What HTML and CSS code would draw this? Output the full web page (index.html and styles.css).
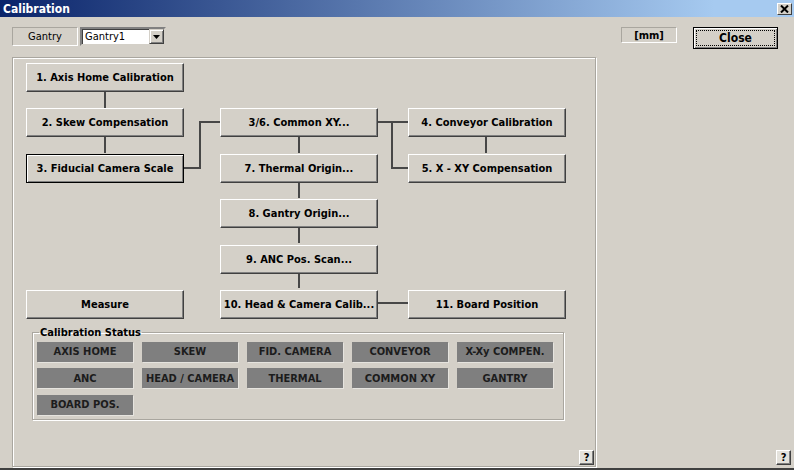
FILE: index.html
```html
<!DOCTYPE html>
<html lang="en">
<head>
  <meta charset="UTF-8" />
  <title>Calibration</title>
  <link rel="stylesheet" href="styles.css">
</head>
<body>
  <div class="window">
    <div class="titlebar">
      <span class="title">Calibration</span>
      <span class="caption-btn">
        <svg width="9" height="8" viewBox="0 0 9 8"><path d="M1 0.5 L8 7.5 M8 0.5 L1 7.5" stroke="#000" stroke-width="2"/></svg>
      </span>
    </div>

    <div class="client">
      <div class="left-pane">
        <div class="gantry-row">
          <span class="static-box">Gantry</span>
          <div class="combo">
            <span class="combo-text">Gantry1</span>
            <span class="combo-btn">
              <svg width="7" height="4" viewBox="0 0 7 4"><path d="M0 0 H7 L3.5 4 Z" fill="#000"/></svg>
            </span>
          </div>
        </div>

        <div class="frame">
          <div class="flow">
            <!-- connector lines between the steps -->
            <svg class="links" width="540" height="256" viewBox="0 0 540 256">
              <g stroke="#474747" stroke-width="2" fill="none">
                <path d="M79 29 V45" />
                <path d="M79 74 V90" />
                <path d="M158 105 H174 V59 H194" />
                <path d="M352 59 H382" />
                <path d="M366 59 V105 H382" />
                <path d="M460 74 V90" />
                <path d="M273 74 V90" />
                <path d="M273 119 V135" />
                <path d="M273 164 V180" />
                <path d="M273 209 V225" />
                <path d="M352 240 H382" />
              </g>
            </svg>

            <button class="step c1 r1">1. Axis Home Calibration</button>
            <button class="step c1 r2">2. Skew Compensation</button>
            <button class="step c1 r3 focused">3. Fiducial Camera Scale</button>
            <button class="step c2 r2">3/6. Common XY...</button>
            <button class="step c2 r3">7. Thermal Origin...</button>
            <button class="step c2 r4">8. Gantry Origin...</button>
            <button class="step c2 r5">9. ANC Pos. Scan...</button>
            <button class="step c2 r6">10. Head &amp; Camera Calib...</button>
            <button class="step c3 r2">4. Conveyor Calibration</button>
            <button class="step c3 r3">5. X - XY Compensation</button>
            <button class="step c3 r6">11. Board Position</button>
            <button class="step c1 r6">Measure</button>
          </div>

          <fieldset class="status">
            <legend>Calibration Status</legend>
            <div class="status-grid">
              <span class="flag">AXIS HOME</span>
              <span class="flag">SKEW</span>
              <span class="flag">FID. CAMERA</span>
              <span class="flag">CONVEYOR</span>
              <span class="flag">X-Xy COMPEN.</span>
              <span class="flag">ANC</span>
              <span class="flag">HEAD / CAMERA</span>
              <span class="flag">THERMAL</span>
              <span class="flag">COMMON XY</span>
              <span class="flag">GANTRY</span>
              <span class="flag">BOARD POS.</span>
            </div>
          </fieldset>

          <button class="help">?</button>
        </div>
      </div>

      <div class="right-pane">
        <div class="unit-row">
          <span class="unit-box">[mm]</span>
          <button class="close-btn"><span class="focus-rect">Close</span></button>
        </div>
        <button class="help">?</button>
      </div>
    </div>
  </div>
</body>
</html>
```

FILE: styles.css
```css
:root {
  --face: #d4d0c8;
  --shadow: #808080;
  --dark: #404040;
  --light: #ffffff;
  --ui-font: "DejaVu Sans Condensed", "Liberation Sans", sans-serif;
}

body {
  margin: 0;
  background-color: var(--face);
  font-family: var(--ui-font);
  font-size: 11px;
  color: #000;
}

.window {
  width: 794px;
  height: 470px;
  display: flex;
  flex-direction: column;
  overflow: hidden;
  box-sizing: border-box;
  border-bottom: 2px solid var(--dark);
}

.titlebar {
  height: 17px;
  flex: none;
  display: flex;
  align-items: center;
  justify-content: space-between;
  padding: 0 2px 0 3px;
  background: linear-gradient(to right, #0a246a, #a6caf0 90%);
}

.title {
  color: #fff;
  font-weight: bold;
  font-size: 12px;
}

.caption-btn {
  width: 15px;
  height: 12px;
  display: flex;
  align-items: center;
  justify-content: center;
  box-sizing: border-box;
  background-color: var(--face);
  border: 1px solid;
  border-color: var(--light) var(--dark) var(--dark) var(--light);
}

.client {
  flex: 1;
  display: flex;
}

.left-pane {
  width: 596px;
  padding: 10px 0 1px 12px;
  box-sizing: border-box;
  display: flex;
  flex-direction: column;
}

/* Gantry selector */
.gantry-row {
  display: flex;
  gap: 2px;
  height: 19px;
}

.static-box {
  width: 66px;
  box-sizing: border-box;
  display: flex;
  align-items: center;
  justify-content: center;
  border: 1px solid;
  border-color: #a9a69f var(--light) var(--light) #a9a69f;
}

.combo {
  width: 86px;
  box-sizing: border-box;
  display: flex;
  align-items: center;
  background-color: #fff;
  border: 2px solid;
  border-color: var(--shadow) var(--face) var(--face) var(--shadow);
  box-shadow: inset 1px 1px 0 var(--dark);
}

.combo-text {
  flex: 1;
  padding-left: 3px;
}

.combo-btn {
  width: 15px;
  height: 15px;
  box-sizing: border-box;
  display: flex;
  align-items: center;
  justify-content: center;
  background-color: var(--face);
  border: 1px solid;
  border-color: var(--face) var(--dark) var(--dark) var(--face);
  box-shadow: inset 1px 1px 0 var(--light), inset -1px -1px 0 var(--shadow);
}

/* main group frame */
.frame {
  flex: 1;
  margin-top: 11px;
  display: flex;
  flex-direction: column;
  border: 1px solid #a9a69f;
  box-shadow: inset 1px 1px 0 var(--light), 1px 1px 0 var(--light);
  padding: 5px 1px 1px 13px;
}

.flow {
  position: relative;
  display: grid;
  grid-template-columns: 158px 36px 158px 30px 158px;
  grid-template-rows: repeat(6, 29px);
  row-gap: 16.4px;
  justify-content: start;
}

.links {
  position: absolute;
  left: 0;
  top: 0;
}

.c1 { grid-column: 1; }
.c2 { grid-column: 3; }
.c3 { grid-column: 5; }
.r1 { grid-row: 1; }
.r2 { grid-row: 2; }
.r3 { grid-row: 3; }
.r4 { grid-row: 4; }
.r5 { grid-row: 5; }
.r6 { grid-row: 6; }

.step, .close-btn, .help {
  position: relative;
  margin: 0;
  padding: 0;
  font-family: var(--ui-font);
  font-weight: bold;
  font-size: 11px;
  color: #000;
  background-color: var(--face);
  border: 1px solid;
  border-color: var(--light) var(--dark) var(--dark) var(--light);
  box-shadow: inset -1px -1px 0 var(--shadow);
}

.step.focused, .close-btn {
  border-color: #000;
  box-shadow: inset 1px 1px 0 var(--light), inset -1px -1px 0 var(--shadow);
}

/* Calibration Status group */
.status {
  width: 532px;
  box-sizing: border-box;
  margin: 7px 0 0 6px;
  padding: 3px 9px 4px 4px;
  border: 1px solid #a9a69f;
  box-shadow: inset 1px 1px 0 var(--light), 1px 1px 0 var(--light);
}

.status legend {
  margin-left: 2px;
  padding: 0 1px;
  font-weight: bold;
}

.status-grid {
  display: grid;
  grid-template-columns: repeat(5, 96px);
  grid-auto-rows: 20px;
  column-gap: 9px;
  row-gap: 6.5px;
}

.flag {
  display: flex;
  align-items: center;
  justify-content: center;
  background-color: #7f7f7f;
  color: #1c1c1c;
  font-weight: bold;
  box-shadow: 1px 1px 0 #e6e4df;
}

.help {
  width: 15px;
  height: 15px;
  font-size: 11px;
  line-height: 11px;
  align-self: flex-end;
  margin-top: auto;
  background-color: #e4e2dc;
}

/* right side */
.right-pane {
  flex: 1;
  display: flex;
  flex-direction: column;
  padding: 10px 3px 3px 25px;
}

.unit-row {
  display: flex;
  align-items: flex-start;
  gap: 16px;
}

.unit-box {
  width: 56px;
  height: 16px;
  box-sizing: border-box;
  display: flex;
  align-items: center;
  justify-content: center;
  font-weight: bold;
  border: 1px solid;
  border-color: #a9a69f var(--light) var(--light) #a9a69f;
}

.close-btn {
  width: 85px;
  height: 22px;
  padding: 3px;
  font-size: 12px;
}

.focus-rect {
  display: flex;
  align-items: center;
  justify-content: center;
  height: 100%;
  outline: 1px dotted #000;
}
```
